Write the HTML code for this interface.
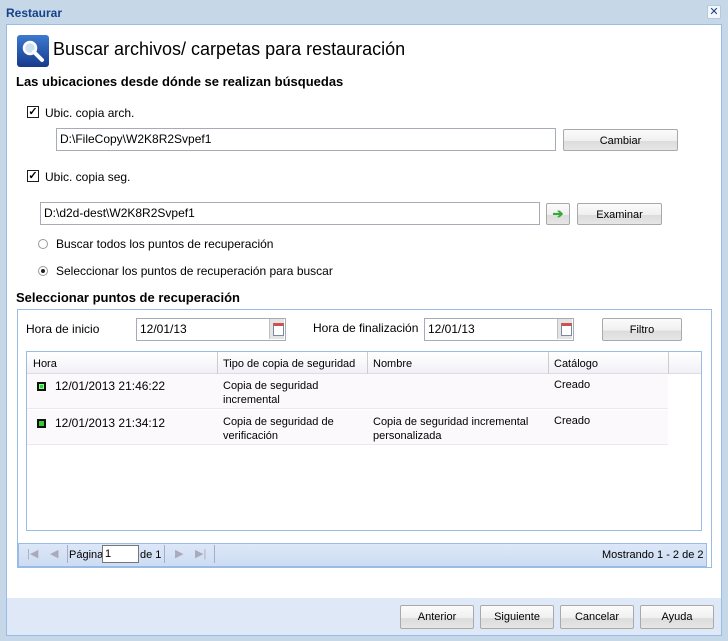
<!DOCTYPE html>
<html><head><meta charset="utf-8"><style>
*{box-sizing:border-box;margin:0;padding:0}
body{width:728px;height:641px;background:#c6d7e8;font-family:Tahoma,"Liberation Sans",sans-serif;font-size:11px;color:#000;position:relative;overflow:hidden}
.a{position:absolute;white-space:nowrap}
.btn{position:absolute;border:1px solid #a9a9a9;border-radius:2px;background:linear-gradient(#fbfbfb 0,#f0f0f0 55%,#dcdcdc 56%,#e6e6e6 100%);text-align:center;font-size:11px;padding-top:5px}
.inp{position:absolute;border:1px solid #a5acb5;background:#fff;padding:3px 0 0 3px;font-size:12px}
.cb{position:absolute;width:12px;height:12px;border:1px solid #1c1c1c;background:#fff;font-size:11px;line-height:10px;text-align:center;font-weight:bold}
.rd{position:absolute;width:10px;height:10px;border:1px solid #9a9a9a;border-radius:50%;background:#fff}
.cal{position:absolute;width:15px;height:20px;background:#e4e4e4;border-left:1px solid #c0c0c0}
.cal:after{content:"";position:absolute;left:3px;top:4px;width:9px;height:9px;border:1px solid #7a8aa0;background:#fff;border-top:3px solid #d05050}
</style></head><body>
<div class="a" style="left:6px;top:6px;font-weight:bold;color:#15428b;font-size:12px">Restaurar</div>
<div class="a" style="left:707px;top:5px;width:14px;height:14px;border:1px solid #b8c8dc;border-radius:2px;background:#f3f7fb;color:#15428b;font-size:11px;line-height:12px;text-align:center">✕</div>
<div class="a" style="left:6px;top:24px;width:716px;height:575px;background:#fff;border:1px solid #99bbe8"></div>
<div class="a" style="left:6px;top:598px;width:716px;height:38px;background:#dfe8f6;border-left:1px solid #99bbe8;border-right:1px solid #99bbe8;border-bottom:1px solid #99bbe8"></div>
<div class="a" style="left:17px;top:35px;width:32px;height:32px;border-radius:3px;background:linear-gradient(#3d7ad0,#163a8c)"><svg width="32" height="32"><circle cx="13" cy="13" r="6" fill="#cfe0f5" stroke="#fff" stroke-width="2.5"/><line x1="17" y1="17" x2="25" y2="25" stroke="#fff" stroke-width="4" stroke-linecap="round"/></svg></div>
<div class="a" style="left:53px;top:39px;font-size:18px">Buscar archivos/ carpetas para restauración</div>
<div class="a" style="left:16px;top:74px;font-size:13px;font-weight:bold">Las ubicaciones desde dónde se realizan búsquedas</div>
<div class="cb" style="left:27px;top:106px">✓</div><div class="a" style="left:45px;top:106px;font-size:12px">Ubic. copia arch.</div>
<div class="inp" style="left:56px;top:128px;width:500px;height:23px">D:\FileCopy\W2K8R2Svpef1</div>
<div class="btn" style="left:563px;top:129px;width:115px;height:22px">Cambiar</div>
<div class="cb" style="left:27px;top:170px">✓</div><div class="a" style="left:45px;top:170px;font-size:12px">Ubic. copia seg.</div>
<div class="inp" style="left:40px;top:202px;width:500px;height:23px">D:\d2d-dest\W2K8R2Svpef1</div>
<div class="btn" style="left:546px;top:203px;width:24px;height:22px;color:#3a3;font-weight:bold;padding-top:2px;font-size:13px">➔</div>
<div class="btn" style="left:577px;top:203px;width:85px;height:22px">Examinar</div>
<div class="rd" style="left:38px;top:239px"></div><div class="a" style="left:56px;top:237px;font-size:12px">Buscar todos los puntos de recuperación</div>
<div class="rd" style="left:38px;top:266px"><div style="position:absolute;left:2px;top:2px;width:4px;height:4px;border-radius:50%;background:#222"></div></div><div class="a" style="left:56px;top:264px;font-size:12px">Seleccionar los puntos de recuperación para buscar</div>
<div class="a" style="left:16px;top:290px;font-size:13px;font-weight:bold">Seleccionar puntos de recuperación</div>
<div class="a" style="left:17px;top:309px;width:695px;height:259px;border:1px solid #99bbe8"></div>
<div class="a" style="left:26px;top:322px;font-size:12px">Hora de inicio</div>
<div class="inp" style="left:136px;top:318px;width:150px;height:23px">12/01/13</div><div class="cal" style="left:269px;top:319px"></div>
<div class="a" style="left:313px;top:321px;font-size:12px">Hora de finalización</div>
<div class="inp" style="left:424px;top:318px;width:150px;height:23px">12/01/13</div><div class="cal" style="left:557px;top:319px"></div>
<div class="btn" style="left:602px;top:318px;width:80px;height:23px">Filtro</div>
<div class="a" style="left:26px;top:351px;width:676px;height:180px;border:1px solid #99bbe8;background:#fff"></div>
<div class="a" style="left:27px;top:352px;width:674px;height:22px;background:linear-gradient(#fff,#f2f0f6);border-bottom:1px solid #dcdce6"></div>
<div class="a" style="left:217px;top:352px;width:1px;height:22px;background:#ccc"></div>
<div class="a" style="left:367px;top:352px;width:1px;height:22px;background:#ccc"></div>
<div class="a" style="left:548px;top:352px;width:1px;height:22px;background:#ccc"></div>
<div class="a" style="left:668px;top:352px;width:1px;height:22px;background:#ccc"></div>
<div class="a" style="left:33px;top:358px">Hora</div><div class="a" style="left:223px;top:358px">Tipo de copia de seguridad</div><div class="a" style="left:373px;top:358px">Nombre</div><div class="a" style="left:554px;top:358px">Catálogo</div>
<div class="a" style="left:27px;top:374px;width:641px;height:35px;background:#fbf9fc;border-bottom:1px solid #ebe8ee"></div>
<div class="a" style="left:27px;top:410px;width:641px;height:35px;background:#fbf9fc;border-bottom:1px solid #ebe8ee"></div>
<div class="a" style="left:37px;top:382px;width:9px;height:9px;background:#3c3;border:2px solid #111;box-shadow:inset 0 0 0 1px #8f8"></div>
<div class="a" style="left:55px;top:379px;font-size:12px">12/01/2013 21:46:22</div>
<div class="a" style="left:223px;top:379px;line-height:14px">Copia de seguridad<br>incremental</div>
<div class="a" style="left:554px;top:379px">Creado</div>
<div class="a" style="left:37px;top:419px;width:9px;height:9px;background:#3c3;border:2px solid #111"></div>
<div class="a" style="left:55px;top:416px;font-size:12px">12/01/2013 21:34:12</div>
<div class="a" style="left:223px;top:415px;line-height:14px">Copia de seguridad de<br>verificación</div>
<div class="a" style="left:373px;top:415px;line-height:14px">Copia de seguridad incremental<br>personalizada</div>
<div class="a" style="left:554px;top:415px">Creado</div>
<div class="a" style="left:18px;top:543px;width:689px;height:24px;background:linear-gradient(#dce8f8,#cddcf2);border:1px solid #99bbe8"></div>
<div class="a" style="left:27px;top:547px;color:#aab">|◀</div><div class="a" style="left:50px;top:547px;color:#aab">◀</div>
<div class="a" style="left:67px;top:545px;width:1px;height:18px;background:#aac"></div>
<div class="a" style="left:69px;top:549px">Página</div>
<div class="a" style="left:102px;top:545px;width:37px;height:18px;background:#fff;border:1px solid #777;padding-left:2px;line-height:16px">1</div>
<div class="a" style="left:140px;top:549px">de 1</div>
<div class="a" style="left:164px;top:545px;width:1px;height:18px;background:#aac"></div>
<div class="a" style="left:175px;top:547px;color:#aab">▶</div><div class="a" style="left:195px;top:547px;color:#aab">▶|</div>
<div class="a" style="left:214px;top:545px;width:1px;height:18px;background:#aac"></div>
<div class="a" style="left:602px;top:549px">Mostrando 1 - 2 de 2</div>
<div class="btn" style="left:400px;top:605px;width:74px;height:24px">Anterior</div>
<div class="btn" style="left:480px;top:605px;width:74px;height:24px">Siguiente</div>
<div class="btn" style="left:560px;top:605px;width:74px;height:24px">Cancelar</div>
<div class="btn" style="left:640px;top:605px;width:74px;height:24px">Ayuda</div>
</body></html>
